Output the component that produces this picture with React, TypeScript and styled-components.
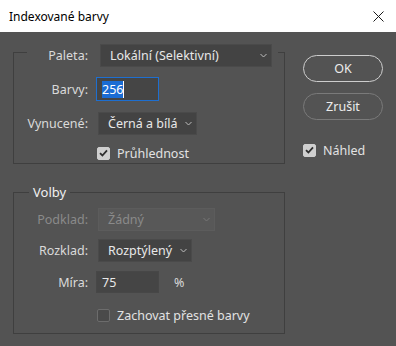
import React from "react";
import styled, { createGlobalStyle } from "styled-components";

const Global = createGlobalStyle`
  html, body { margin: 0; padding: 0; background: #535353; }
  body { font-family: "Noto Sans", "Open Sans", sans-serif; }
  * { box-sizing: border-box; }
`;

const Window = styled.div`
  width: 396px;
  height: 346px;
  display: flex;
  flex-direction: column;
  background: #535353;
  overflow: hidden;
`;

const TitleBar = styled.div`
  height: 32px;
  flex: none;
  background: #ffffff;
  display: flex;
  align-items: center;
  justify-content: space-between;
  padding: 0 12px 0 9px;
  font-size: 12px;
  color: #000;
`;

const Close = styled.svg`
  width: 11px;
  height: 11px;
`;

const Body = styled.div`
  flex: 1;
  display: flex;
  align-items: flex-start;
  padding: 5px 0 0 13px;
`;

const LeftCol = styled.div`
  width: 272px;
  display: flex;
  flex-direction: column;
`;

const Group = styled.fieldset<{ $top: number; $bottom: number }>`
  margin: ${(p) => p.$top}px 0 0 0;
  padding: 0 0 ${(p) => p.$bottom}px 0;
  border: 1px solid #3f3f3f;
  display: flex;
  flex-direction: column;
  min-width: 0;
`;

const RowLegend = styled.legend`
  margin-left: 13px;
  padding: 7px 6px 0 0;
  width: 251px;
`;

const TextLegend = styled.legend`
  margin-left: 15px;
  padding: 0 4px;
  font-size: 13px;
  line-height: 16px;
  color: #f0f0f0;
`;

const Row = styled.div<{ $label: number; $gap: number; $mt?: number }>`
  display: grid;
  grid-template-columns: ${(p) => p.$label}px auto 1fr;
  column-gap: ${(p) => p.$gap}px;
  align-items: center;
  margin-top: ${(p) => p.$mt ?? 0}px;
`;

const Label = styled.span<{ $disabled?: boolean }>`
  text-align: right;
  font-size: 12.5px;
  color: ${(p) => (p.$disabled ? "#8a8a8a" : "#dadada")};
  white-space: nowrap;
`;

const Select = styled.div<{ $w: number; $disabled?: boolean }>`
  width: ${(p) => p.$w}px;
  height: 23px;
  display: flex;
  align-items: center;
  justify-content: space-between;
  padding: 0 4px 0 9px;
  background: ${(p) => (p.$disabled ? "#585858" : "#434343")};
  border: 1px solid ${(p) => (p.$disabled ? "#5c5c5c" : "#4a4a4a")};
  font-size: 12.5px;
  color: ${(p) => (p.$disabled ? "#8a8a8a" : "#e8e8e8")};
  white-space: nowrap;
`;

const Chevron = styled.svg`
  width: 7px;
  height: 5px;
  flex: none;
`;

const Input = styled.div<{ $focus?: boolean }>`
  width: 63px;
  height: ${(p) => (p.$focus ? 24 : 22)}px;
  display: flex;
  align-items: center;
  padding: 0 5px;
  background: #454545;
  border: 1px solid ${(p) => (p.$focus ? "#1e6fd0" : "#474747")};
  font-size: 12.5px;
  color: #e8e8e8;
`;

const Selected = styled.span`
  background: #1a6cd4;
  color: #ffffff;
  border-right: 1px solid #ffffff;
`;

const Unit = styled.span`
  font-size: 12.5px;
  color: #dadada;
  margin-left: 7px;
`;

const CheckRow = styled.label<{ $ml: number; $mt?: number }>`
  display: flex;
  align-items: center;
  gap: 7px;
  margin-left: ${(p) => p.$ml}px;
  margin-top: ${(p) => p.$mt ?? 0}px;
  font-size: 12.5px;
  color: #e2e2e2;
  height: 14px;
`;

const Box = styled.span<{ $checked: boolean }>`
  width: 13px;
  height: 13px;
  border-radius: 2px;
  display: flex;
  align-items: center;
  justify-content: center;
  background: ${(p) => (p.$checked ? "#cfcfcf" : "#4a4a4a")};
  border: 1px solid ${(p) => (p.$checked ? "#cfcfcf" : "#6c6c6c")};
`;

const RightCol = styled.div`
  margin-left: 18px;
  padding-top: 18px;
  display: flex;
  flex-direction: column;
  align-items: flex-start;
`;

const Button = styled.div<{ $primary?: boolean; $mt?: number }>`
  width: 80px;
  height: 27px;
  margin-top: ${(p) => p.$mt ?? 0}px;
  border-radius: 14px;
  border: ${(p) => (p.$primary ? "1.5px solid #cdcdcd" : "1.5px solid #7a7a7a")};
  display: flex;
  align-items: center;
  justify-content: center;
  font-size: 12.5px;
  color: #ececec;
`;

const ChevronIcon = ({ color = "#bdbdbd" }: { color?: string }) => (
  <Chevron viewBox="0 0 7 5">
    <path d="M0.5 1 L3.5 4 L6.5 1" fill="none" stroke={color} strokeWidth="1" />
  </Chevron>
);

const Check = ({ checked }: { checked: boolean }) => (
  <Box $checked={checked}>
    {checked && (
      <svg width="9" height="8" viewBox="0 0 9 8">
        <path d="M1 4.2 L3.4 6.5 L8 1.4" fill="none" stroke="#2e2e2e" strokeWidth="1.8" />
      </svg>
    )}
  </Box>
);

export default function App() {
  return (
    <>
      <Global />
      <Window>
        <TitleBar>
          <span>Indexované barvy</span>
          <Close viewBox="0 0 11 11">
            <path d="M0.5 0.5 L10.5 10.5 M10.5 0.5 L0.5 10.5" stroke="#1a1a1a" strokeWidth="1" />
          </Close>
        </TitleBar>
        <Body>
          <LeftCol>
            <Group $top={0} $bottom={3}>
              <RowLegend>
                <Row $label={61} $gap={12}>
                  <Label>Paleta:</Label>
                  <Select $w={172}>
                    <span>Lokální (Selektivní)</span>
                    <ChevronIcon />
                  </Select>
                </Row>
              </RowLegend>
              <Row $label={74} $gap={8} $mt={10}>
                <Label>Barvy:</Label>
                <Input $focus>
                  <Selected>256</Selected>
                </Input>
              </Row>
              <Row $label={74} $gap={10} $mt={11}>
                <Label>Vynucené:</Label>
                <Select $w={99}>
                  <span>Černá a bílá</span>
                  <ChevronIcon />
                </Select>
              </Row>
              <CheckRow $ml={83} $mt={11}>
                <Check checked />
                <span>Průhlednost</span>
              </CheckRow>
            </Group>
            <Group $top={20} $bottom={11}>
              <TextLegend>Volby</TextLegend>
              <Row $label={74} $gap={10} $mt={8}>
                <Label $disabled>Podklad:</Label>
                <Select $w={117} $disabled>
                  <span>Žádný</span>
                  <ChevronIcon color="#777" />
                </Select>
              </Row>
              <Row $label={74} $gap={10} $mt={8}>
                <Label>Rozklad:</Label>
                <Select $w={94}>
                  <span>Rozptýlený</span>
                  <ChevronIcon />
                </Select>
              </Row>
              <Row $label={74} $gap={8} $mt={9}>
                <Label>Míra:</Label>
                <Input>75</Input>
                <Unit>%</Unit>
              </Row>
              <CheckRow $ml={83} $mt={15}>
                <Check checked={false} />
                <span>Zachovat přesné barvy</span>
              </CheckRow>
            </Group>
          </LeftCol>
          <RightCol>
            <Button $primary>OK</Button>
            <Button $mt={11}>Zrušit</Button>
            <CheckRow $ml={0} $mt={23}>
              <Check checked />
              <span>Náhled</span>
            </CheckRow>
          </RightCol>
        </Body>
      </Window>
    </>
  );
}
